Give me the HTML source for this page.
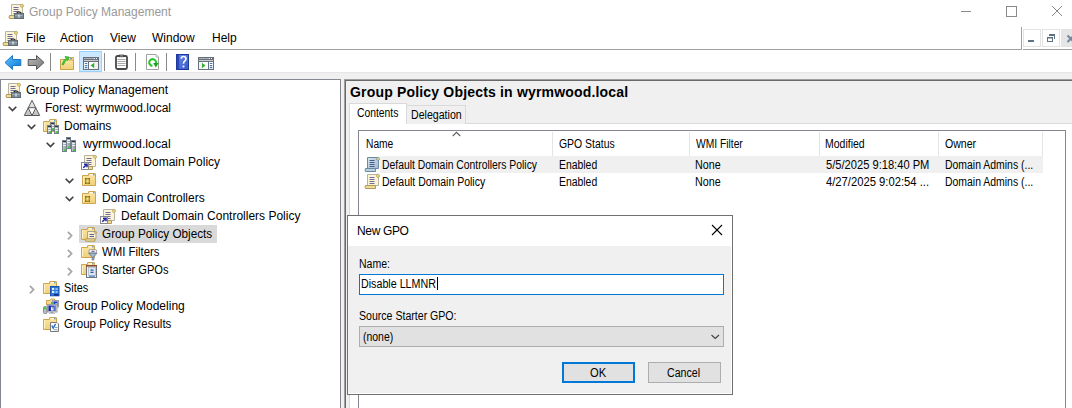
<!DOCTYPE html>
<html><head><meta charset="utf-8"><style>
html,body{margin:0;padding:0;}
body{width:1072px;height:408px;overflow:hidden;position:relative;background:#fff;font-family:"Liberation Sans",sans-serif;}
.t{position:absolute;white-space:pre;}
svg{overflow:visible}
</style></head><body>
<svg width="0" height="0" style="position:absolute"><defs>
<linearGradient id="gFold" x1="0" y1="0" x2="0" y2="1"><stop offset="0" stop-color="#fbe7a6"/><stop offset="1" stop-color="#f0cf78"/></linearGradient>
<linearGradient id="gSrv" x1="0" y1="0" x2="1" y2="0"><stop offset="0" stop-color="#c4cad0"/><stop offset="1" stop-color="#8a959e"/></linearGradient>
<linearGradient id="gTri" x1="0" y1="0" x2="0" y2="1"><stop offset="0" stop-color="#f4f4f4"/><stop offset="1" stop-color="#bdbdbd"/></linearGradient>
<linearGradient id="gBlueArrow" x1="0" y1="0" x2="1" y2="1"><stop offset="0" stop-color="#5cc2ff"/><stop offset="1" stop-color="#0a78d8"/></linearGradient>
<linearGradient id="gGrayArrow" x1="0" y1="0" x2="1" y2="1"><stop offset="0" stop-color="#b8b8b8"/><stop offset="1" stop-color="#7a7a7a"/></linearGradient>
<linearGradient id="gHelp" x1="0" y1="0" x2="1" y2="1"><stop offset="0" stop-color="#6d8ef0"/><stop offset="1" stop-color="#3558c8"/></linearGradient>
<linearGradient id="gScrollB" x1="0" y1="0" x2="1" y2="1"><stop offset="0" stop-color="#d8e6f0"/><stop offset="1" stop-color="#9fb8cc"/></linearGradient>
<radialGradient id="gOU" cx="0.5" cy="0.5" r="0.6"><stop offset="0" stop-color="#f4eab0"/><stop offset="0.55" stop-color="#c8a840"/><stop offset="1" stop-color="#7a5e10"/></radialGradient>
</defs></svg>
<svg style="position:absolute;left:8px;top:3px" width="16" height="16" viewBox="0 0 16 16"><path d="M3.5 1.5H13.5Q15.5 1.5 14.5 3.5V12.5H3.5Z" fill="#fcf4d4" stroke="#b8b4a4"/><circle cx="14" cy="2.8" r="1.6" fill="#ead27a" stroke="#b09a5a" stroke-width="0.6"/><path d="M5.5 4.5h5M5.5 6.5h5M5.5 8.5h5M5.5 10.5h5" stroke="#6e6e9e" stroke-width="1"/><path d="M1.5 12.5H11.5V15.5H1.5Q0.5 14 1.5 12.5Z" fill="#ecdc98" stroke="#b09a5a"/><path d="M8.7 10.2Q11 7.6 13.3 10.2" fill="none" stroke="#202020" stroke-width="1.2"/><rect x="6.5" y="10.5" width="9" height="5" fill="#7a8a96" stroke="#5e6b75"/><path d="M7 12.5h8" stroke="#9aa8b2" stroke-width="1"/><rect x="10.5" y="11.5" width="1" height="3" fill="#fff"/></svg>
<div class="t" style="left:29px;top:6px;font-size:12px;line-height:12px;color:#999999;font-weight:normal;letter-spacing:0px;">Group Policy Management</div>
<svg style="position:absolute;left:955px;top:0px" width="117" height="24" viewBox="0 0 117 24"><path d="M6 11.5h10" stroke="#8a8a8a" stroke-width="1"/><rect x="51.5" y="6.5" width="10" height="10" fill="none" stroke="#8a8a8a"/><path d="M97 6l10 10M107 6l-10 10" stroke="#8a8a8a" stroke-width="1"/></svg>
<svg style="position:absolute;left:2px;top:30px" width="16" height="16" viewBox="0 0 16 16"><path d="M3.5 1.5H13.5Q15.5 1.5 14.5 3.5V12.5H3.5Z" fill="#fcf4d4" stroke="#b8b4a4"/><circle cx="14" cy="2.8" r="1.6" fill="#ead27a" stroke="#b09a5a" stroke-width="0.6"/><path d="M5.5 4.5h5M5.5 6.5h5M5.5 8.5h5M5.5 10.5h5" stroke="#6e6e9e" stroke-width="1"/><path d="M1.5 12.5H11.5V15.5H1.5Q0.5 14 1.5 12.5Z" fill="#ecdc98" stroke="#b09a5a"/><path d="M8.7 10.2Q11 7.6 13.3 10.2" fill="none" stroke="#202020" stroke-width="1.2"/><rect x="6.5" y="10.5" width="9" height="5" fill="#7a8a96" stroke="#5e6b75"/><path d="M7 12.5h8" stroke="#9aa8b2" stroke-width="1"/><rect x="10.5" y="11.5" width="1" height="3" fill="#fff"/></svg>
<div class="t" style="left:26px;top:32px;font-size:12px;line-height:12px;color:#000;font-weight:normal;letter-spacing:0px;">File</div>
<div class="t" style="left:60px;top:32px;font-size:12px;line-height:12px;color:#000;font-weight:normal;letter-spacing:0px;">Action</div>
<div class="t" style="left:110px;top:32px;font-size:12px;line-height:12px;color:#000;font-weight:normal;letter-spacing:0px;">View</div>
<div class="t" style="left:152px;top:32px;font-size:12px;line-height:12px;color:#000;font-weight:normal;letter-spacing:0px;">Window</div>
<div class="t" style="left:212px;top:32px;font-size:12px;line-height:12px;color:#000;font-weight:normal;letter-spacing:0px;">Help</div>
<div style="position:absolute;left:0px;top:49px;width:1021px;height:1px;background:#a0a0a0"></div>
<div style="position:absolute;left:1021px;top:27px;width:1px;height:23px;background:#a0a0a0"></div>
<div style="position:absolute;left:1023px;top:49px;width:49px;height:1px;background:#a0a0a0"></div>
<div style="position:absolute;left:1023px;top:29px;width:18px;height:18px;box-sizing:border-box;border:1px solid #e3e3e3;background:#fff"></div>
<div style="position:absolute;left:1042px;top:29px;width:18px;height:18px;box-sizing:border-box;border:1px solid #e3e3e3;background:#fff"></div>
<div style="position:absolute;left:1061px;top:29px;width:18px;height:18px;box-sizing:border-box;border:1px solid #e3e3e3;background:#e5e5e5"></div>
<svg style="position:absolute;left:1023px;top:29px" width="49" height="17" viewBox="0 0 49 17"><rect x="5" y="11" width="6" height="2" fill="#5f7283"/><path d="M26 5h6v2h-6z M31 7h1v3h-1z" fill="#5f7283"/><path d="M24 8h6v1.6h-6z M24 9.6h1v3.4h-1z M29 9.6h1v3.4h-1z M24 12h6v1h-6z" fill="#5f7283"/><path d="M44.5 6.5L51 13M51 6.5L44.5 13" stroke="#7489a0" stroke-width="2"/></svg>
<div style="position:absolute;left:0px;top:72px;width:1072px;height:1px;background:#e6e6e6"></div>
<div style="position:absolute;left:0px;top:73px;width:1072px;height:6px;background:#f0f0f0"></div>
<div style="position:absolute;left:79px;top:51px;width:23px;height:21px;box-sizing:border-box;border:1px solid #99d1ff;background:#cce8ff"></div>
<svg style="position:absolute;left:0px;top:50px" width="220" height="22" viewBox="0 0 220 22"><path d="M5 12.5L12.5 5.5V9.5H20.8V15.5H12.5V19.5Z" fill="url(#gBlueArrow)" stroke="#1a78c8" stroke-width="1"/><path d="M44 12.5L36.5 5.5V9.5H28.2V15.5H36.5V19.5Z" fill="url(#gGrayArrow)" stroke="#555" stroke-width="1"/><rect x="50" y="3" width="1" height="18" fill="#8a8a8a"/><rect x="104" y="3" width="1" height="18" fill="#8a8a8a"/><rect x="135" y="3" width="1" height="18" fill="#8a8a8a"/><rect x="166" y="3" width="1" height="18" fill="#8a8a8a"/><path d="M60.5 9.5H71Q73.5 9.5 73.5 11V19.5H60.5Z" fill="url(#gFold)" stroke="#c9a24a"/><rect x="68.5" y="7.5" width="5" height="2.5" fill="#f6dd96" stroke="#c9a24a" stroke-width="0.8"/><rect x="70" y="8.2" width="2" height="1" fill="#3a8ee0"/><path d="M62 14.5Q63.5 10 66 8.5L65 6.5L69 7L67.5 10.5L67 9.5Q65 11 63.5 14.8Z" fill="#3ad83a" stroke="#20a020" stroke-width="0.7"/><g transform="translate(83,7)"><rect x="0.5" y="0.5" width="15" height="12" fill="#fff" stroke="#6b717a"/><path d="M1 1.5h10" stroke="#a8aeb6" stroke-width="1"/><rect x="12" y="1" width="1" height="1" fill="#6b717a"/><rect x="14" y="1" width="1" height="1" fill="#6b717a"/><path d="M1 2.5h14" stroke="#6b717a" stroke-width="1"/><path d="M1 3.5h14" stroke="#c8ccd2" stroke-width="1"/><path d="M1 4.5h14" stroke="#6b717a" stroke-width="1"/><path d="M5.5 5v7" stroke="#6b717a" stroke-width="1"/><rect x="6" y="5" width="9" height="7" fill="#f2f2f2"/><rect x="6" y="5" width="5" height="7" fill="#fff"/><path d="M2.3 6.5h1.6M2.3 8.7h1.6M2.3 10.7h1.6" stroke="#3a7ac8" stroke-width="1.2" stroke-linecap="round"/><path d="M11.2 5.8V11.2L7.6 8.5Z" fill="#30b030"/></g><rect x="116" y="6" width="11" height="13" rx="1.5" fill="#fff" stroke="#474747" stroke-width="1.8"/><rect x="119" y="4.6" width="5" height="2.6" fill="#4a4a4a"/><rect x="120" y="5.4" width="3" height="1" fill="#9a9a9a"/><path d="M117.5 9.5h8M117.5 11.5h8M117.5 13.5h8M117.5 15.5h8" stroke="#a8a8a8" stroke-width="1"/><path d="M146.5 4.5H156L158.5 7V19.5H146.5Z" fill="#fff" stroke="#a0a0a0"/><path d="M156 4.5V7H158.5" fill="#e8e8e8" stroke="#b0b0b0" stroke-width="0.8"/><path d="M152.4 15.9A3.4 3.4 0 1 1 155.9 13.4" fill="none" stroke="#2cc42c" stroke-width="2.1"/><path d="M153.2 13L158.6 13L155.8 17.4Z" fill="#18a818"/><rect x="176.5" y="4.5" width="12" height="15" fill="url(#gHelp)" stroke="#1e3a98"/><rect x="177" y="5" width="2.2" height="14" fill="#2a48b8"/><path d="M181.2 8.6Q181.5 6.5 183.5 6.5Q186 6.5 186 8.8Q186 10.3 184.4 11.4Q183.5 12 183.5 13.8" fill="none" stroke="#fff" stroke-width="1.6"/><rect x="182.6" y="15.6" width="1.8" height="1.8" fill="#fff"/><g transform="translate(198,7)"><rect x="0.5" y="0.5" width="15" height="12" fill="#fff" stroke="#6b717a"/><path d="M1 1.5h10" stroke="#a8aeb6" stroke-width="1"/><rect x="12" y="1" width="1" height="1" fill="#6b717a"/><rect x="14" y="1" width="1" height="1" fill="#6b717a"/><path d="M1 2.5h14" stroke="#6b717a" stroke-width="1"/><path d="M1 3.5h14" stroke="#c8ccd2" stroke-width="1"/><path d="M1 4.5h14" stroke="#6b717a" stroke-width="1"/><path d="M10.5 5v7" stroke="#6b717a" stroke-width="1"/><rect x="1" y="5" width="9" height="7" fill="#f2f2f2"/><rect x="5" y="5" width="5" height="7" fill="#fff"/><path d="M12.3 6.5h1.6M12.3 8.7h1.6M12.3 10.7h1.6" stroke="#3a7ac8" stroke-width="1.2" stroke-linecap="round"/><path d="M4 5.8V11.2L7.5 8.5Z" fill="#30b030"/></g></svg>
<div style="position:absolute;left:0px;top:79px;width:341px;height:340px;box-sizing:border-box;border:1px solid #828790;background:#fff"></div>
<div style="position:absolute;left:341px;top:79px;width:3px;height:340px;background:#f0f0f0"></div>
<svg style="position:absolute;left:5px;top:82px" width="16" height="16" viewBox="0 0 16 16"><path d="M3.5 1.5H13.5Q15.5 1.5 14.5 3.5V12.5H3.5Z" fill="#fcf4d4" stroke="#b8b4a4"/><circle cx="14" cy="2.8" r="1.6" fill="#ead27a" stroke="#b09a5a" stroke-width="0.6"/><path d="M5.5 4.5h5M5.5 6.5h5M5.5 8.5h5M5.5 10.5h5" stroke="#6e6e9e" stroke-width="1"/><path d="M1.5 12.5H11.5V15.5H1.5Q0.5 14 1.5 12.5Z" fill="#ecdc98" stroke="#b09a5a"/><path d="M8.7 10.2Q11 7.6 13.3 10.2" fill="none" stroke="#202020" stroke-width="1.2"/><rect x="6.5" y="10.5" width="9" height="5" fill="#7a8a96" stroke="#5e6b75"/><path d="M7 12.5h8" stroke="#9aa8b2" stroke-width="1"/><rect x="10.5" y="11.5" width="1" height="3" fill="#fff"/></svg>
<div class="t" style="left:26px;top:84px;font-size:12px;line-height:12px;color:#000;font-weight:normal;letter-spacing:0px;">Group Policy Management</div>
<svg style="position:absolute;left:8px;top:106px" width="10" height="7" viewBox="0 0 10 7"><path d="M0.7 0.7L4.5 4.5L8.3 0.7" fill="none" stroke="#404040" stroke-width="1.6"/></svg>
<svg style="position:absolute;left:24px;top:100px" width="16" height="16" viewBox="0 0 16 16"><path d="M8 0.3L15.7 15.5H0.3Z" fill="url(#gTri)" stroke="#5a5a5a" stroke-width="1"/><path d="M4.1 7.7H11.9L8 15.5Z" fill="#fff" stroke="#5a5a5a" stroke-width="1"/></svg>
<div class="t" style="left:45px;top:102px;font-size:12px;line-height:12px;color:#000;font-weight:normal;letter-spacing:0px;">Forest: wyrmwood.local</div>
<svg style="position:absolute;left:27px;top:124px" width="10" height="7" viewBox="0 0 10 7"><path d="M0.7 0.7L4.5 4.5L8.3 0.7" fill="none" stroke="#404040" stroke-width="1.6"/></svg>
<svg style="position:absolute;left:43px;top:118px" width="16" height="16" viewBox="0 0 16 16"><g transform="translate(-1,0)"><path d="M1.5 3.5H7.5V1.8Q7.5 1.5 8 1.5H14Q14.5 1.5 14.5 2V13.5H1.5Z" fill="url(#gFold)" stroke="#cda552"/><path d="M2.5 4.5V12.5" stroke="#fff3c8" stroke-width="1"/><rect x="9" y="2.3" width="3" height="1" fill="#fff"/><rect x="12" y="2.3" width="1.6" height="1" fill="#3a8ee0"/></g><rect x="7.5" y="4.5" width="4" height="8" fill="url(#gSrv)" stroke="#75808a" stroke-width="1"/><rect x="8" y="5" width="3" height="1" fill="#2d3a44"/><rect x="8" y="7" width="3" height="1" fill="#e8eef2"/><rect x="8" y="9" width="3" height="1" fill="#e8eef2"/><rect x="9.2" y="10.4" width="1.6" height="1.6" fill="#22d822"/><rect x="4.5" y="7.5" width="4" height="8" fill="url(#gSrv)" stroke="#75808a" stroke-width="1"/><rect x="5" y="8" width="3" height="1" fill="#2d3a44"/><rect x="5" y="10" width="3" height="1" fill="#e8eef2"/><rect x="5" y="12" width="3" height="1" fill="#e8eef2"/><rect x="6.2" y="13.4" width="1.6" height="1.6" fill="#22d822"/><rect x="11.5" y="7.5" width="4" height="8" fill="url(#gSrv)" stroke="#75808a" stroke-width="1"/><rect x="12" y="8" width="3" height="1" fill="#2d3a44"/><rect x="12" y="10" width="3" height="1" fill="#e8eef2"/><rect x="12" y="12" width="3" height="1" fill="#e8eef2"/><rect x="13.2" y="13.4" width="1.6" height="1.6" fill="#22d822"/></svg>
<div class="t" style="left:64px;top:120px;font-size:12px;line-height:12px;color:#000;font-weight:normal;letter-spacing:0px;">Domains</div>
<svg style="position:absolute;left:46px;top:142px" width="10" height="7" viewBox="0 0 10 7"><path d="M0.7 0.7L4.5 4.5L8.3 0.7" fill="none" stroke="#404040" stroke-width="1.6"/></svg>
<svg style="position:absolute;left:62px;top:136px" width="16" height="16" viewBox="0 0 16 16"><rect x="4.5" y="1.5" width="4" height="11" fill="url(#gSrv)" stroke="#75808a" stroke-width="1"/><rect x="5" y="2" width="3" height="1" fill="#2d3a44"/><rect x="5" y="4" width="3" height="1" fill="#e8eef2"/><rect x="5" y="6" width="3" height="1" fill="#e8eef2"/><rect x="6.2" y="10.4" width="1.6" height="1.6" fill="#22d822"/><rect x="0.5" y="4.5" width="4" height="11" fill="url(#gSrv)" stroke="#75808a" stroke-width="1"/><rect x="1" y="5" width="3" height="1" fill="#2d3a44"/><rect x="1" y="7" width="3" height="1" fill="#e8eef2"/><rect x="1" y="9" width="3" height="1" fill="#e8eef2"/><rect x="2.2" y="13.4" width="1.6" height="1.6" fill="#22d822"/><rect x="9.5" y="4.5" width="4" height="11" fill="url(#gSrv)" stroke="#75808a" stroke-width="1"/><rect x="10" y="5" width="3" height="1" fill="#2d3a44"/><rect x="10" y="7" width="3" height="1" fill="#e8eef2"/><rect x="10" y="9" width="3" height="1" fill="#e8eef2"/><rect x="11.2" y="13.4" width="1.6" height="1.6" fill="#22d822"/></svg>
<div class="t" style="left:83px;top:138px;font-size:12px;line-height:12px;color:#000;font-weight:normal;letter-spacing:0px;transform:scaleX(1.027);transform-origin:0 0;">wyrmwood.local</div>
<svg style="position:absolute;left:81px;top:154px" width="16" height="16" viewBox="0 0 16 16"><path d="M3.5 1.5H13.5Q15.5 1.5 14.5 3.5V12.5H3.5Z" fill="#fcf4d4" stroke="#b8b4a4"/><circle cx="14" cy="2.8" r="1.6" fill="#ead27a" stroke="#b09a5a" stroke-width="0.6"/><path d="M5.5 4.5h5M5.5 6.5h5M5.5 8.5h5M5.5 10.5h5" stroke="#6e6e9e" stroke-width="1"/><path d="M1.5 12.5H11.5V15.5H1.5Q0.5 14 1.5 12.5Z" fill="#ecdc98" stroke="#b09a5a"/><rect x="0.5" y="8.5" width="7" height="7" fill="#fff" stroke="#8a8a8a"/><path d="M2.3 13.8L5.6 10.5M3 10.2H6V13.2" fill="none" stroke="#2a2aa0" stroke-width="1.6"/></svg>
<div class="t" style="left:102px;top:156px;font-size:12px;line-height:12px;color:#000;font-weight:normal;letter-spacing:0px;">Default Domain Policy</div>
<svg style="position:absolute;left:65px;top:178px" width="10" height="7" viewBox="0 0 10 7"><path d="M0.7 0.7L4.5 4.5L8.3 0.7" fill="none" stroke="#404040" stroke-width="1.6"/></svg>
<svg style="position:absolute;left:81px;top:172px" width="16" height="16" viewBox="0 0 16 16"><g transform="translate(0,0)"><path d="M1.5 3.5H7.5V1.8Q7.5 1.5 8 1.5H14Q14.5 1.5 14.5 2V13.5H1.5Z" fill="url(#gFold)" stroke="#cda552"/><path d="M2.5 4.5V12.5" stroke="#fff3c8" stroke-width="1"/><rect x="9" y="2.3" width="3" height="1" fill="#fff"/><rect x="12" y="2.3" width="1.6" height="1" fill="#3a8ee0"/></g><rect x="4" y="6" width="5" height="6" fill="url(#gOU)"/></svg>
<div class="t" style="left:102px;top:174px;font-size:12px;line-height:12px;color:#000;font-weight:normal;letter-spacing:0px;transform:scaleX(0.882);transform-origin:0 0;">CORP</div>
<svg style="position:absolute;left:65px;top:196px" width="10" height="7" viewBox="0 0 10 7"><path d="M0.7 0.7L4.5 4.5L8.3 0.7" fill="none" stroke="#404040" stroke-width="1.6"/></svg>
<svg style="position:absolute;left:81px;top:190px" width="16" height="16" viewBox="0 0 16 16"><g transform="translate(0,0)"><path d="M1.5 3.5H7.5V1.8Q7.5 1.5 8 1.5H14Q14.5 1.5 14.5 2V13.5H1.5Z" fill="url(#gFold)" stroke="#cda552"/><path d="M2.5 4.5V12.5" stroke="#fff3c8" stroke-width="1"/><rect x="9" y="2.3" width="3" height="1" fill="#fff"/><rect x="12" y="2.3" width="1.6" height="1" fill="#3a8ee0"/></g><rect x="4" y="6" width="5" height="6" fill="url(#gOU)"/></svg>
<div class="t" style="left:102px;top:192px;font-size:12px;line-height:12px;color:#000;font-weight:normal;letter-spacing:0px;">Domain Controllers</div>
<svg style="position:absolute;left:100px;top:208px" width="16" height="16" viewBox="0 0 16 16"><path d="M3.5 1.5H13.5Q15.5 1.5 14.5 3.5V12.5H3.5Z" fill="#fcf4d4" stroke="#b8b4a4"/><circle cx="14" cy="2.8" r="1.6" fill="#ead27a" stroke="#b09a5a" stroke-width="0.6"/><path d="M5.5 4.5h5M5.5 6.5h5M5.5 8.5h5M5.5 10.5h5" stroke="#6e6e9e" stroke-width="1"/><path d="M1.5 12.5H11.5V15.5H1.5Q0.5 14 1.5 12.5Z" fill="#ecdc98" stroke="#b09a5a"/><rect x="0.5" y="8.5" width="7" height="7" fill="#fff" stroke="#8a8a8a"/><path d="M2.3 13.8L5.6 10.5M3 10.2H6V13.2" fill="none" stroke="#2a2aa0" stroke-width="1.6"/></svg>
<div class="t" style="left:121px;top:210px;font-size:12px;line-height:12px;color:#000;font-weight:normal;letter-spacing:0px;">Default Domain Controllers Policy</div>
<div style="position:absolute;left:79px;top:225px;width:138px;height:18px;background:#d9d9d9"></div>
<svg style="position:absolute;left:67px;top:231px" width="7" height="10" viewBox="0 0 7 10"><path d="M0.9 0.9L4.6 4.6L0.9 8.3" fill="none" stroke="#a6a6a6" stroke-width="1.7"/></svg>
<svg style="position:absolute;left:81px;top:226px" width="16" height="16" viewBox="0 0 16 16"><g transform="translate(-1,0)"><path d="M1.5 3.5H7.5V1.8Q7.5 1.5 8 1.5H14Q14.5 1.5 14.5 2V13.5H1.5Z" fill="url(#gFold)" stroke="#cda552"/><path d="M2.5 4.5V12.5" stroke="#fff3c8" stroke-width="1"/><rect x="9" y="2.3" width="3" height="1" fill="#fff"/><rect x="12" y="2.3" width="1.6" height="1" fill="#3a8ee0"/></g><path d="M6.5 5.5H14Q16 5.5 15 7.5V13H6.5Z" fill="#f8f0d0" stroke="#a8a290"/><circle cx="14.6" cy="6.6" r="1.1" fill="#e0c060" stroke="#a08a50" stroke-width="0.5"/><path d="M8.5 8.5h4.5M8.5 10.5h4.5" stroke="#5e5e90" stroke-width="1"/><path d="M4.8 12.8H14V15.2H4.8Q4 14 4.8 12.8Z" fill="#ecdc98" stroke="#b09a5a"/></svg>
<div class="t" style="left:102px;top:228px;font-size:12px;line-height:12px;color:#000;font-weight:normal;letter-spacing:0px;transform:scaleX(0.978);transform-origin:0 0;">Group Policy Objects</div>
<svg style="position:absolute;left:67px;top:249px" width="7" height="10" viewBox="0 0 7 10"><path d="M0.9 0.9L4.6 4.6L0.9 8.3" fill="none" stroke="#a6a6a6" stroke-width="1.7"/></svg>
<svg style="position:absolute;left:81px;top:244px" width="16" height="16" viewBox="0 0 16 16"><g transform="translate(-1,0)"><path d="M1.5 3.5H7.5V1.8Q7.5 1.5 8 1.5H14Q14.5 1.5 14.5 2V13.5H1.5Z" fill="url(#gFold)" stroke="#cda552"/><path d="M2.5 4.5V12.5" stroke="#fff3c8" stroke-width="1"/><rect x="9" y="2.3" width="3" height="1" fill="#fff"/><rect x="12" y="2.3" width="1.6" height="1" fill="#3a8ee0"/></g><rect x="8" y="5.6" width="7.6" height="3.4" rx="1.2" fill="#f6f6f6" stroke="#8a8a8a" stroke-width="0.8"/><path d="M10.5 7.3h3" stroke="#505080" stroke-width="1"/><path d="M7.5 9.2H16L12.8 12.8V16H11.2V12.8Z" fill="#9db9d0" stroke="#56708a" stroke-width="0.8"/></svg>
<div class="t" style="left:102px;top:246px;font-size:12px;line-height:12px;color:#000;font-weight:normal;letter-spacing:0px;transform:scaleX(0.949);transform-origin:0 0;">WMI Filters</div>
<svg style="position:absolute;left:67px;top:267px" width="7" height="10" viewBox="0 0 7 10"><path d="M0.9 0.9L4.6 4.6L0.9 8.3" fill="none" stroke="#a6a6a6" stroke-width="1.7"/></svg>
<svg style="position:absolute;left:81px;top:262px" width="16" height="16" viewBox="0 0 16 16"><g transform="translate(-1,-1)"><path d="M1.5 3.5H7.5V1.8Q7.5 1.5 8 1.5H14Q14.5 1.5 14.5 2V13.5H1.5Z" fill="url(#gFold)" stroke="#cda552"/><path d="M2.5 4.5V12.5" stroke="#fff3c8" stroke-width="1"/><rect x="9" y="2.3" width="3" height="1" fill="#fff"/><rect x="12" y="2.3" width="1.6" height="1" fill="#3a8ee0"/></g><rect x="5.5" y="3.5" width="10" height="12" fill="#f2f5f8" stroke="#6f747a"/><rect x="5" y="3" width="11" height="1.6" fill="#8a4a30"/><rect x="7.5" y="5.5" width="7" height="8" fill="#dfe8f2" stroke="#9aa8b8" stroke-width="0.6"/><path d="M9.5 8.2h3M9.5 10.3h3" stroke="#2a5aa0" stroke-width="1.2"/><path d="M8 14.2h6" stroke="#3a78c0" stroke-width="1"/></svg>
<div class="t" style="left:102px;top:264px;font-size:12px;line-height:12px;color:#000;font-weight:normal;letter-spacing:0px;transform:scaleX(0.923);transform-origin:0 0;">Starter GPOs</div>
<svg style="position:absolute;left:29px;top:285px" width="7" height="10" viewBox="0 0 7 10"><path d="M0.9 0.9L4.6 4.6L0.9 8.3" fill="none" stroke="#a6a6a6" stroke-width="1.7"/></svg>
<svg style="position:absolute;left:43px;top:280px" width="16" height="16" viewBox="0 0 16 16"><g transform="translate(-1,0)"><path d="M1.5 3.5H7.5V1.8Q7.5 1.5 8 1.5H14Q14.5 1.5 14.5 2V13.5H1.5Z" fill="url(#gFold)" stroke="#cda552"/><path d="M2.5 4.5V12.5" stroke="#fff3c8" stroke-width="1"/><rect x="9" y="2.3" width="3" height="1" fill="#fff"/><rect x="12" y="2.3" width="1.6" height="1" fill="#3a8ee0"/></g><rect x="7.5" y="6.5" width="8.5" height="9.3" fill="#2c7ad8" stroke="#1a4fb0"/><rect x="9" y="8" width="2.2" height="2" fill="#e0f0ff"/><rect x="12.5" y="8" width="2.2" height="2" fill="#8ac0f0"/><rect x="9" y="11" width="2.2" height="2" fill="#e0f0ff"/><rect x="12.5" y="11" width="2.2" height="2" fill="#8ac0f0"/><rect x="11" y="14" width="4.5" height="1.6" fill="#0c2c90"/></svg>
<div class="t" style="left:64px;top:282px;font-size:12px;line-height:12px;color:#000;font-weight:normal;letter-spacing:0px;transform:scaleX(0.904);transform-origin:0 0;">Sites</div>
<svg style="position:absolute;left:43px;top:298px" width="16" height="16" viewBox="0 0 16 16"><path d="M3.5 2.5H7L8 1H11.5V7H3.5Z" fill="url(#gFold)" stroke="#cda552"/><rect x="9.5" y="2.5" width="6" height="6.5" fill="#d0d4d8" stroke="#9a9ea2"/><rect x="10.5" y="3.5" width="4" height="4.5" fill="#1a3ad0"/><rect x="12.5" y="5" width="1.2" height="2" fill="#e8ecf0"/><rect x="8" y="4" width="2" height="4" fill="#8a9098"/><rect x="8.3" y="4.6" width="1.4" height="1.2" fill="#20e020"/><rect x="4.5" y="6.5" width="9.5" height="7.5" fill="#cfd3d7" stroke="#9aa0a6"/><linearGradient id="gScr" x1="0" y1="0" x2="1" y2="0"><stop offset="0" stop-color="#0818b0"/><stop offset="1" stop-color="#6a8ae8"/></linearGradient><rect x="5.5" y="7.5" width="7.5" height="5.5" fill="url(#gScr)"/><path d="M8 9h2.5v3.5H8Z" fill="#f4f4f4"/><rect x="9.3" y="9.4" width="1" height="1" fill="#202020"/><rect x="7.5" y="14" width="3" height="1" fill="#a0a4a8"/><rect x="6" y="15" width="6" height="1" fill="#c4c8cc"/><rect x="0.5" y="8.5" width="3.3" height="7" rx="1" fill="#b8bcc0" stroke="#8a8e92"/><rect x="1" y="9.5" width="2.3" height="1.6" fill="#20e020"/></svg>
<div class="t" style="left:64px;top:300px;font-size:12px;line-height:12px;color:#000;font-weight:normal;letter-spacing:0px;">Group Policy Modeling</div>
<svg style="position:absolute;left:43px;top:316px" width="16" height="16" viewBox="0 0 16 16"><g transform="translate(-1,0)"><path d="M1.5 3.5H7.5V1.8Q7.5 1.5 8 1.5H14Q14.5 1.5 14.5 2V13.5H1.5Z" fill="url(#gFold)" stroke="#cda552"/><path d="M2.5 4.5V12.5" stroke="#fff3c8" stroke-width="1"/><rect x="9" y="2.3" width="3" height="1" fill="#fff"/><rect x="12" y="2.3" width="1.6" height="1" fill="#3a8ee0"/></g><path d="M7.5 6.5H14L15.5 8V15.5H7.5Z" fill="#fff" stroke="#7a7a7a"/><path d="M8.8 9.5L10.2 12.2L12.6 7.8" fill="none" stroke="#2a70c0" stroke-width="1.4"/><path d="M12 11.5h2.5M11 13.8h3.5" stroke="#7080a0" stroke-width="0.8"/></svg>
<div class="t" style="left:64px;top:318px;font-size:12px;line-height:12px;color:#000;font-weight:normal;letter-spacing:0px;transform:scaleX(0.958);transform-origin:0 0;">Group Policy Results</div>
<div style="position:absolute;left:344px;top:79px;width:728px;height:340px;background:#f0f0f0"></div>
<div style="position:absolute;left:344px;top:79px;width:728px;height:1px;background:#a0a0a0"></div>
<div style="position:absolute;left:344px;top:79px;width:1px;height:340px;background:#a0a0a0"></div>
<div style="position:absolute;left:345px;top:80px;width:727px;height:1px;background:#696969"></div>
<div style="position:absolute;left:345px;top:80px;width:1px;height:340px;background:#696969"></div>
<div class="t" style="left:350px;top:85px;font-size:14px;line-height:14px;color:#000;font-weight:bold;letter-spacing:0.18px;">Group Policy Objects in wyrmwood.local</div>
<div style="position:absolute;left:349px;top:123px;width:723px;height:300px;box-sizing:border-box;border:1px solid #d9d9d9;border-right:none;border-bottom:none;background:#fff"></div>
<div style="position:absolute;left:406px;top:105px;width:60px;height:19px;box-sizing:border-box;border:1px solid #d9d9d9;border-bottom:none;background:#f0f0f0"></div>
<div style="position:absolute;left:349px;top:103px;width:58px;height:21px;box-sizing:border-box;border:1px solid #d9d9d9;border-bottom:none;background:#fff"></div>
<div class="t" style="left:356.70px;top:107px;font-size:12px;line-height:12px;color:#000;transform:scaleX(0.862);transform-origin:0 0">Contents</div>
<div class="t" style="left:410.82px;top:109px;font-size:12px;line-height:12px;color:#000;transform:scaleX(0.884);transform-origin:0 0">Delegation</div>
<div style="position:absolute;left:358px;top:130px;width:708px;height:300px;box-sizing:border-box;border:1px solid #828790;background:#fff"></div>
<div style="position:absolute;left:552px;top:132px;width:1px;height:24px;background:#e5e5e5"></div>
<div style="position:absolute;left:689px;top:132px;width:1px;height:24px;background:#e5e5e5"></div>
<div style="position:absolute;left:819px;top:132px;width:1px;height:24px;background:#e5e5e5"></div>
<div style="position:absolute;left:938px;top:132px;width:1px;height:24px;background:#e5e5e5"></div>
<div style="position:absolute;left:1042px;top:132px;width:1px;height:24px;background:#e5e5e5"></div>
<svg style="position:absolute;left:452px;top:131px" width="9" height="6" viewBox="0 0 9 6"><path d="M0.8 5L4.5 1.3L8.2 5" fill="none" stroke="#606060" stroke-width="1.1"/></svg>
<div class="t" style="left:365.65px;top:138px;font-size:12px;line-height:12px;color:#000;transform:scaleX(0.852);transform-origin:0 0">Name</div>
<div class="t" style="left:558.70px;top:138px;font-size:12px;line-height:12px;color:#000;transform:scaleX(0.87);transform-origin:0 0">GPO Status</div>
<div class="t" style="left:696.30px;top:138px;font-size:12px;line-height:12px;color:#000;transform:scaleX(0.856);transform-origin:0 0">WMI Filter</div>
<div class="t" style="left:825.42px;top:138px;font-size:12px;line-height:12px;color:#000;transform:scaleX(0.875);transform-origin:0 0">Modified</div>
<div class="t" style="left:944.80px;top:138px;font-size:12px;line-height:12px;color:#000;transform:scaleX(0.88);transform-origin:0 0">Owner</div>
<div style="position:absolute;left:380px;top:156px;width:663px;height:17px;background:#f0f0f0"></div>
<svg style="position:absolute;left:364px;top:156px" width="16" height="16" viewBox="0 0 16 16"><path d="M3.5 1.5H13.5Q15.5 1.5 14.5 3.5V12.5H3.5Z" fill="url(#gScrollB)" stroke="#6a88a0"/><circle cx="14" cy="2.8" r="1.6" fill="#ead27a" stroke="#6a88a0" stroke-width="0.6"/><path d="M5.5 4.5h5M5.5 6.5h5M5.5 8.5h5M5.5 10.5h5" stroke="#4a5a8a" stroke-width="1"/><path d="M1.5 12.5H11.5V15.5H1.5Q0.5 14 1.5 12.5Z" fill="#b8d0e0" stroke="#6a88a0"/></svg>
<svg style="position:absolute;left:364px;top:173px" width="16" height="16" viewBox="0 0 16 16"><path d="M3.5 1.5H13.5Q15.5 1.5 14.5 3.5V12.5H3.5Z" fill="#fcf4d4" stroke="#b8b4a4"/><circle cx="14" cy="2.8" r="1.6" fill="#ead27a" stroke="#b09a5a" stroke-width="0.6"/><path d="M5.5 4.5h5M5.5 6.5h5M5.5 8.5h5M5.5 10.5h5" stroke="#6e6e9e" stroke-width="1"/><path d="M1.5 12.5H11.5V15.5H1.5Q0.5 14 1.5 12.5Z" fill="#ecdc98" stroke="#b09a5a"/></svg>
<div class="t" style="left:381.84px;top:159px;font-size:12px;line-height:12px;color:#000;transform:scaleX(0.864);transform-origin:0 0">Default Domain Controllers Policy</div>
<div class="t" style="left:558.63px;top:159px;font-size:12px;line-height:12px;color:#000;transform:scaleX(0.867);transform-origin:0 0">Enabled</div>
<div class="t" style="left:695.41px;top:159px;font-size:12px;line-height:12px;color:#000;transform:scaleX(0.893);transform-origin:0 0">None</div>
<div class="t" style="left:826.30px;top:159px;font-size:12px;line-height:12px;color:#000;transform:scaleX(0.928);transform-origin:0 0">5/5/2025 9:18:40 PM</div>
<div class="t" style="left:944.73px;top:159px;font-size:12px;line-height:12px;color:#000;transform:scaleX(0.87);transform-origin:0 0">Domain Admins (...</div>
<div class="t" style="left:381.83px;top:176px;font-size:12px;line-height:12px;color:#000;transform:scaleX(0.874);transform-origin:0 0">Default Domain Policy</div>
<div class="t" style="left:558.63px;top:176px;font-size:12px;line-height:12px;color:#000;transform:scaleX(0.867);transform-origin:0 0">Enabled</div>
<div class="t" style="left:695.41px;top:176px;font-size:12px;line-height:12px;color:#000;transform:scaleX(0.893);transform-origin:0 0">None</div>
<div class="t" style="left:826.30px;top:176px;font-size:12px;line-height:12px;color:#000;transform:scaleX(0.936);transform-origin:0 0">4/27/2025 9:02:54 ...</div>
<div class="t" style="left:944.73px;top:176px;font-size:12px;line-height:12px;color:#000;transform:scaleX(0.87);transform-origin:0 0">Domain Admins (...</div>
<div style="position:absolute;left:347px;top:215px;width:386px;height:180px;box-sizing:border-box;border:1px solid #707070;background:#fff"></div>
<div style="position:absolute;left:348px;top:246px;width:383px;height:147px;background:#f0f0f0"></div>
<div class="t" style="left:357px;top:225px;font-size:12px;line-height:12px;color:#000;font-weight:normal;letter-spacing:-0.35px;">New GPO</div>
<svg style="position:absolute;left:711px;top:224px" width="12" height="12" viewBox="0 0 12 12"><path d="M1 1L11 11M11 1L1 11" stroke="#000" stroke-width="1.1"/></svg>
<div class="t" style="left:358.93px;top:258px;font-size:12px;line-height:12px;color:#000;transform:scaleX(0.874);transform-origin:0 0">Name:</div>
<div style="position:absolute;left:359px;top:274px;width:365px;height:21px;box-sizing:border-box;border:1px solid #0078d7;background:#fff"></div>
<div class="t" style="left:361.41px;top:278px;font-size:12px;line-height:12px;color:#000;transform:scaleX(0.892);transform-origin:0 0">Disable LLMNR</div>
<div style="position:absolute;left:437px;top:277px;width:1px;height:13px;background:#000"></div>
<div class="t" style="left:358.72px;top:310px;font-size:12px;line-height:12px;color:#000;transform:scaleX(0.881);transform-origin:0 0">Source Starter GPO:</div>
<div style="position:absolute;left:359px;top:326px;width:365px;height:21px;box-sizing:border-box;border:1px solid #adadad;background:#e1e1e1"></div>
<div class="t" style="left:363.00px;top:331px;font-size:12px;line-height:12px;color:#000;transform:scaleX(0.871);transform-origin:0 0">(none)</div>
<svg style="position:absolute;left:709px;top:332px" width="12" height="8" viewBox="0 0 12 8"><path d="M2.5 3L6.2 6.5L10 3" fill="none" stroke="#404040" stroke-width="1.1"/></svg>
<div style="position:absolute;left:562px;top:362px;width:73px;height:21px;box-sizing:border-box;border:2px solid #0078d7;background:#e1e1e1"></div>
<div style="position:absolute;left:648px;top:362px;width:73px;height:21px;box-sizing:border-box;border:1px solid #adadad;background:#e1e1e1"></div>
<div class="t" style="left:590.40px;top:367px;font-size:12px;line-height:12px;color:#000;transform:scaleX(0.929);transform-origin:0 0">OK</div>
<div class="t" style="left:667.40px;top:367px;font-size:12px;line-height:12px;color:#000;transform:scaleX(0.884);transform-origin:0 0">Cancel</div>
</body></html>
